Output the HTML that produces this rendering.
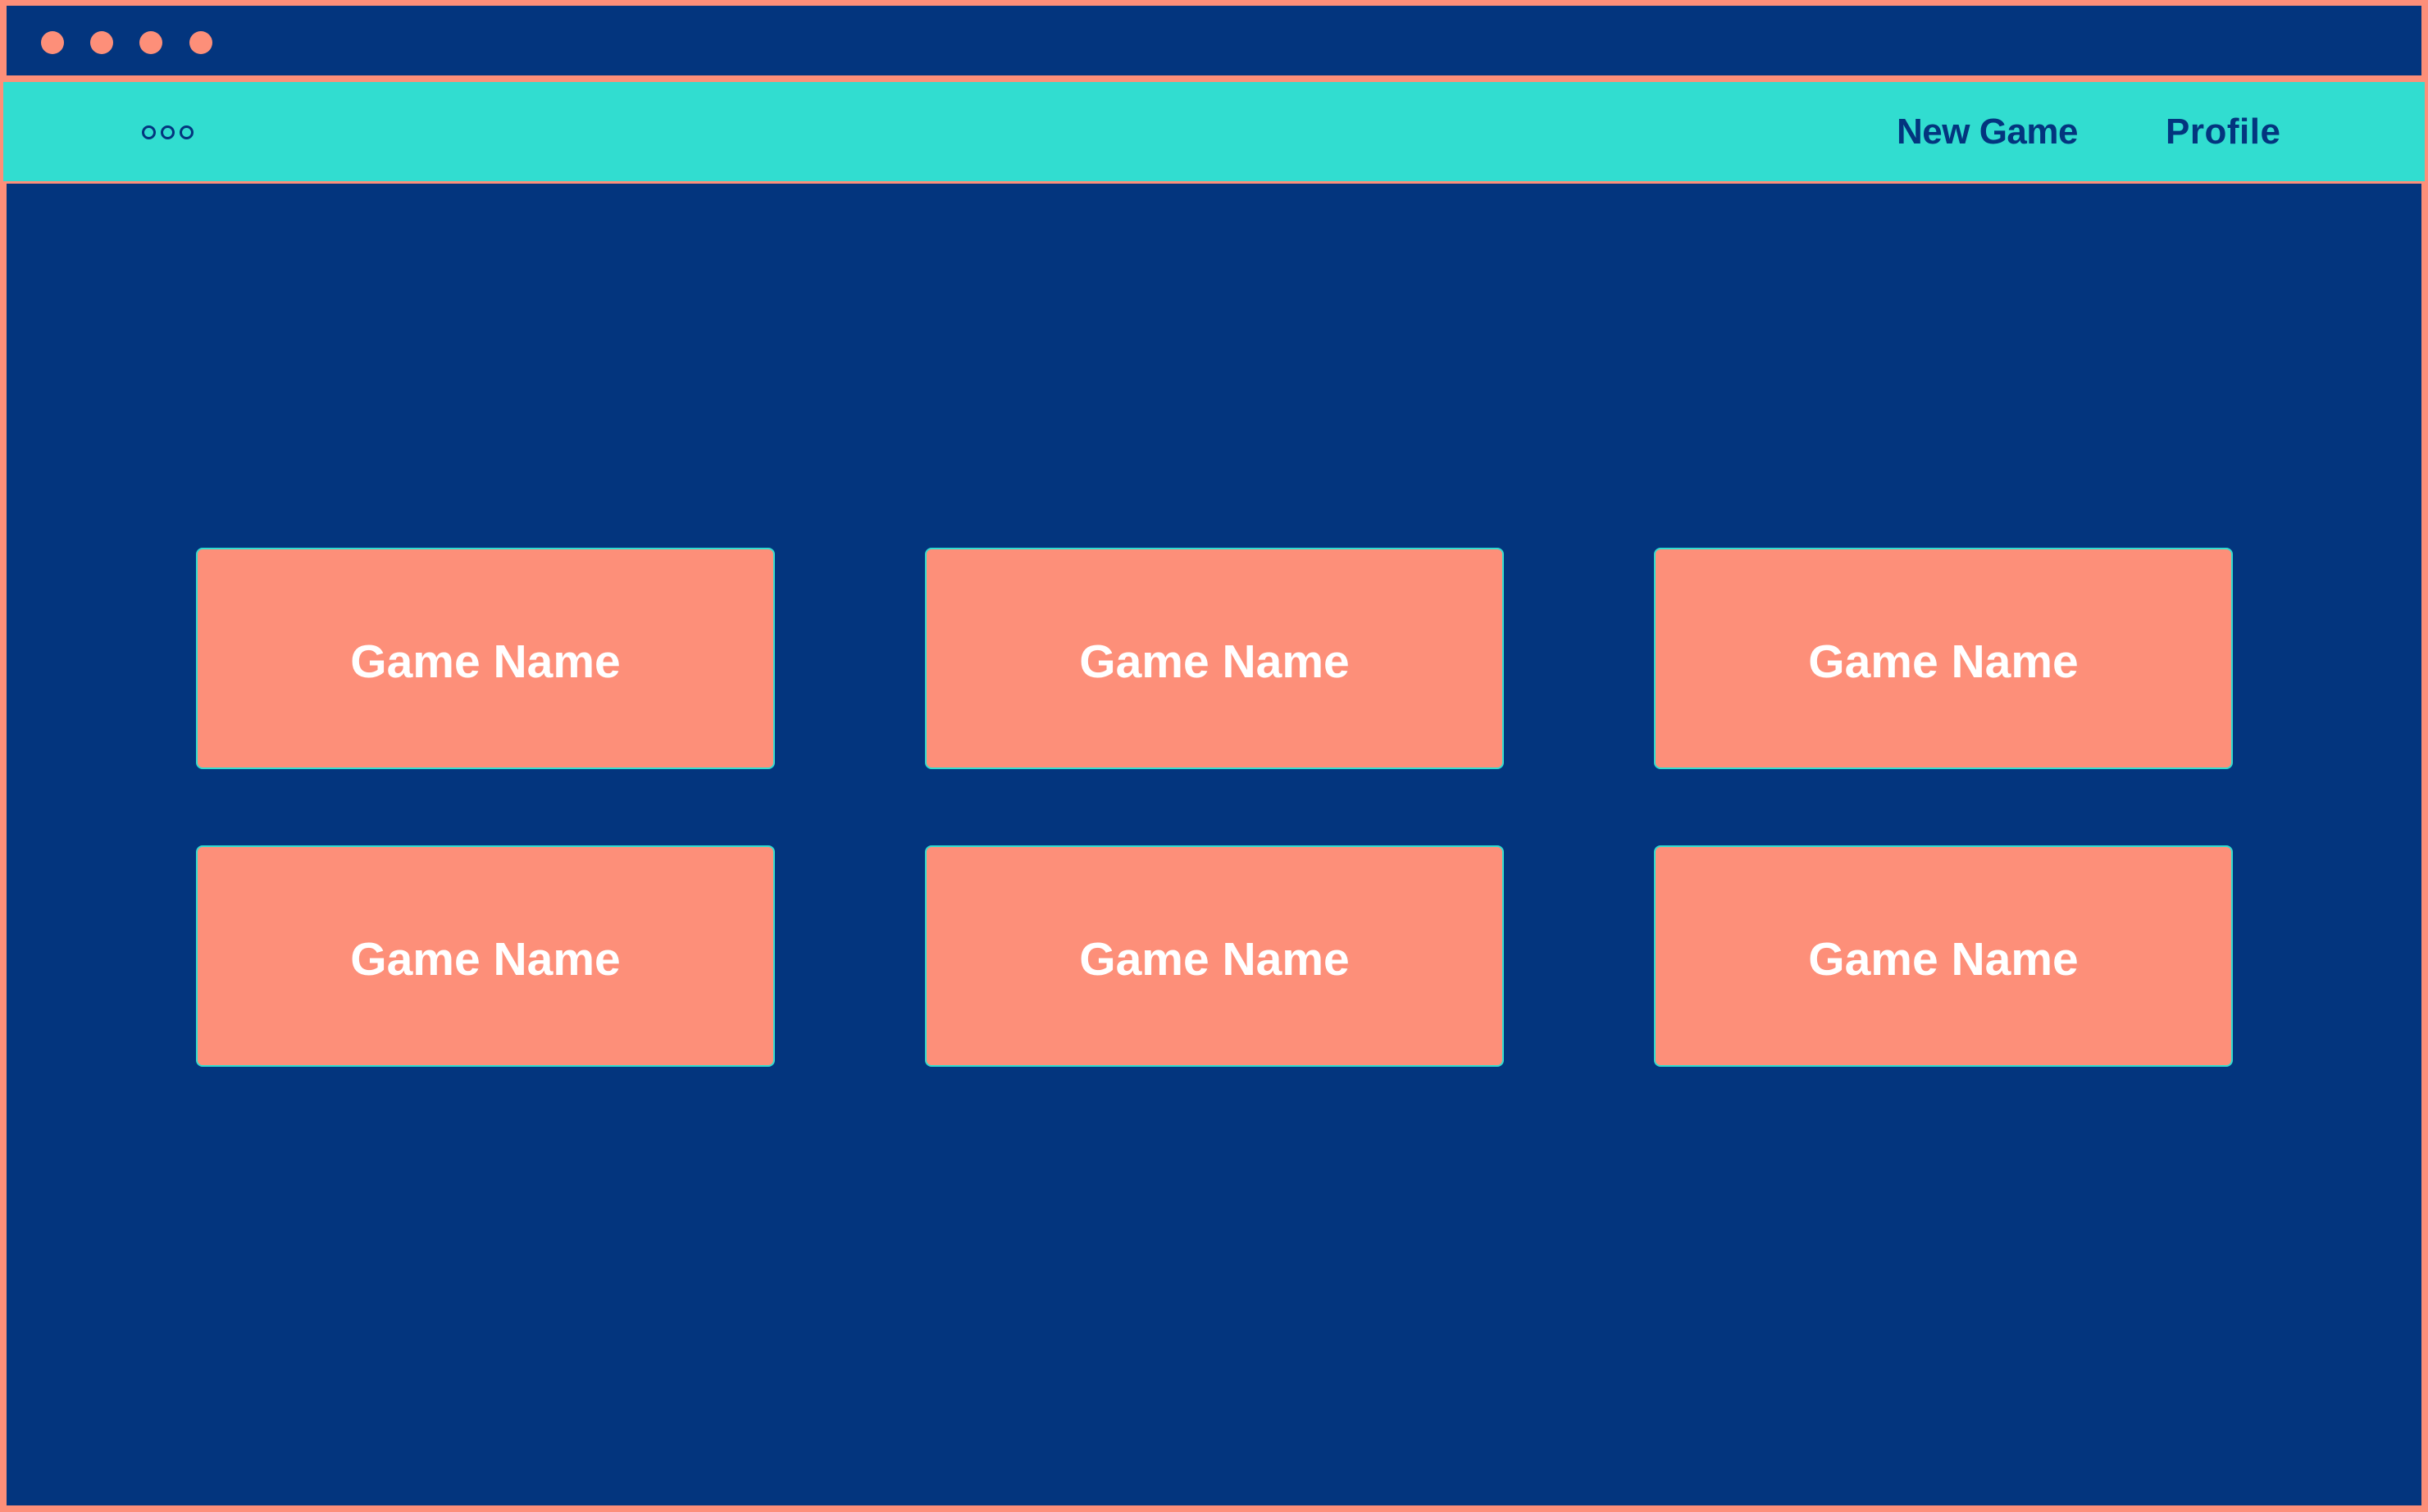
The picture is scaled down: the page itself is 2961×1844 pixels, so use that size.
<!DOCTYPE html>
<html><head><style>
*{margin:0;padding:0;box-sizing:border-box}
html,body{width:2961px;height:1844px;overflow:hidden;background:#fd8f79;font-family:"Liberation Sans",sans-serif}
.main{position:absolute;left:8px;top:7px;width:2945px;height:1829px;background:#03357e}
.teal{position:absolute;left:4px;top:100px;width:2953px;height:121px;background:#31ddd0}
.strip{position:absolute;left:0;top:92px;width:2961px;height:8px;background:#fd8f79}
.strip2{position:absolute;left:0;top:221px;width:2961px;height:3px;background:#fd8f79}
.dot{position:absolute;top:38px;width:28px;height:28px;border-radius:50%;background:#fd8f79}
.c{position:absolute;top:153px;width:17px;height:17px;border-radius:50%;border:3px solid #03357e}
.nav{position:absolute;top:133px;font-size:44px;font-weight:bold;color:#03357e;line-height:56px;letter-spacing:-0.5px}
.card{position:absolute;width:706px;height:270px;background:#fd8f79;border:2px solid #31ddd0;border-radius:8px;color:#fff;font-weight:bold;font-size:57px;display:flex;align-items:center;justify-content:center;padding-top:8px}
</style></head><body>
<div class="main"></div>
<div class="strip"></div>
<div class="teal"></div>
<div class="strip2"></div>
<div class="dot" style="left:50px"></div>
<div class="dot" style="left:110px"></div>
<div class="dot" style="left:170px"></div>
<div class="dot" style="left:231px"></div>
<div class="c" style="left:173px"></div>
<div class="c" style="left:196px"></div>
<div class="c" style="left:219px"></div>
<div class="nav" style="left:2313px">New Game</div>
<div class="nav" style="left:2641px;letter-spacing:0.5px">Profile</div>
<div class="card" style="left:239px;top:668px">Game Name</div>
<div class="card" style="left:1128px;top:668px">Game Name</div>
<div class="card" style="left:2017px;top:668px">Game Name</div>
<div class="card" style="left:239px;top:1031px">Game Name</div>
<div class="card" style="left:1128px;top:1031px">Game Name</div>
<div class="card" style="left:2017px;top:1031px">Game Name</div>
</body></html>
